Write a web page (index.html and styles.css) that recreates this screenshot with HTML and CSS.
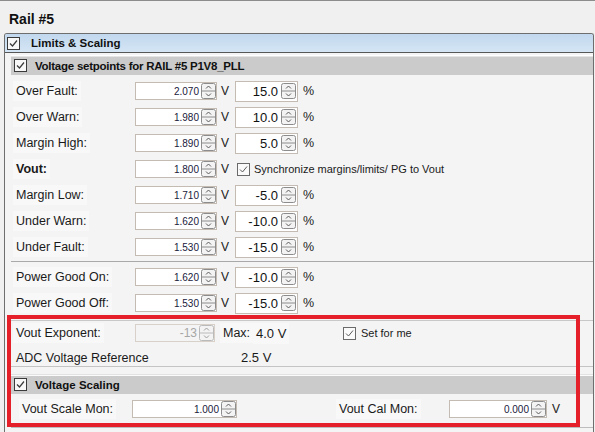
FILE: index.html
```html
<!DOCTYPE html>
<html>
<head>
<meta charset="utf-8">
<link rel="stylesheet" href="styles.css">
</head>
<body>
<svg class="defs" xmlns="http://www.w3.org/2000/svg">
  <symbol id="spin" viewBox="0 0 15 16">
    <rect x="0.5" y="0.5" width="14" height="15" rx="2" fill="#f3f3f3" stroke="#8c8c8c"/>
    <line x1="1" y1="8" x2="14" y2="8" stroke="#8c8c8c"/>
    <path d="M5 5.5 L7.5 3 L10 5.5" fill="none" stroke="#5a5a5a"/>
    <path d="M5 10.5 L7.5 13 L10 10.5" fill="none" stroke="#5a5a5a"/>
  </symbol>
  <symbol id="chk" viewBox="0 0 13 13">
    <rect x="0.5" y="0.5" width="12" height="12" fill="#f7f7f7" stroke="#3a3a3a"/>
    <path d="M3 6.5 L5.5 9 L10 3.5" fill="none" stroke="#3a3a3a" stroke-width="1.2"/>
  </symbol>
  <symbol id="chk2" viewBox="0 0 13 13">
    <rect x="0.5" y="0.5" width="12" height="12" fill="#fafafa" stroke="#6a6a6a"/>
    <path d="M3 6.5 L5.5 9 L10 3.5" fill="none" stroke="#5a5a5a" stroke-width="1"/>
  </symbol>
</svg>
<div class="app">
  <div class="title">Rail #5</div>
  <div class="panel">
    <div class="phead"><svg class="cb"><use href="#chk"/></svg>Limits &amp; Scaling</div>
    <div class="pbody">
      <div class="group">
        <div class="ghead tight"><svg class="cb cb2"><use href="#chk"/></svg>Voltage setpoints for RAIL #5 P1V8_PLL</div>
        <div class="rows">
          <div class="row"><span class="lbl"><span class="lt">Over Fault:</span></span><span class="box b1"><span class="val">2.070</span><svg class="spin"><use href="#spin"/></svg></span><span class="unit">V</span><span class="box b2"><span class="val">15.0</span><svg class="spin"><use href="#spin"/></svg></span><span class="pct">%</span></div>
          <div class="row"><span class="lbl"><span class="lt">Over Warn:</span></span><span class="box b1"><span class="val">1.980</span><svg class="spin"><use href="#spin"/></svg></span><span class="unit">V</span><span class="box b2"><span class="val">10.0</span><svg class="spin"><use href="#spin"/></svg></span><span class="pct">%</span></div>
          <div class="row"><span class="lbl"><span class="lt">Margin High:</span></span><span class="box b1"><span class="val">1.890</span><svg class="spin"><use href="#spin"/></svg></span><span class="unit">V</span><span class="box b2"><span class="val">5.0</span><svg class="spin"><use href="#spin"/></svg></span><span class="pct">%</span></div>
          <div class="row"><span class="lbl bold"><span class="lt">Vout:</span></span><span class="box b1"><span class="val">1.800</span><svg class="spin"><use href="#spin"/></svg></span><span class="unit">V</span><svg class="cbs"><use href="#chk2"/></svg><span class="small">Synchronize margins/limits/ PG to Vout</span></div>
          <div class="row"><span class="lbl"><span class="lt">Margin Low:</span></span><span class="box b1"><span class="val">1.710</span><svg class="spin"><use href="#spin"/></svg></span><span class="unit">V</span><span class="box b2"><span class="val">-5.0</span><svg class="spin"><use href="#spin"/></svg></span><span class="pct">%</span></div>
          <div class="row"><span class="lbl"><span class="lt">Under Warn:</span></span><span class="box b1"><span class="val">1.620</span><svg class="spin"><use href="#spin"/></svg></span><span class="unit">V</span><span class="box b2"><span class="val">-10.0</span><svg class="spin"><use href="#spin"/></svg></span><span class="pct">%</span></div>
          <div class="row"><span class="lbl"><span class="lt">Under Fault:</span></span><span class="box b1"><span class="val">1.530</span><svg class="spin"><use href="#spin"/></svg></span><span class="unit">V</span><span class="box b2"><span class="val">-15.0</span><svg class="spin"><use href="#spin"/></svg></span><span class="pct">%</span></div>
        </div>
        <div class="sep"></div>
        <div class="row"><span class="lbl"><span class="lt">Power Good On:</span></span><span class="box b1"><span class="val">1.620</span><svg class="spin"><use href="#spin"/></svg></span><span class="unit">V</span><span class="box b2"><span class="val">-10.0</span><svg class="spin"><use href="#spin"/></svg></span><span class="pct">%</span></div>
        <div class="row"><span class="lbl"><span class="lt">Power Good Off:</span></span><span class="box b1"><span class="val">1.530</span><svg class="spin"><use href="#spin"/></svg></span><span class="unit">V</span><span class="box b2"><span class="val">-15.0</span><svg class="spin"><use href="#spin"/></svg></span><span class="pct">%</span></div>
        <div class="sep2"></div>
        <div class="row exp"><span class="lbl"><span class="lt">Vout Exponent:</span></span><span class="box b1 dis"><span class="val">-13</span><svg class="spin"><use href="#spin"/></svg></span><span class="max"><span class="lt">Max:</span></span><span class="maxv"><span class="lt">4.0 V</span></span><svg class="cbs cbset"><use href="#chk2"/></svg><span class="small">Set for me</span></div>
        <div class="row adc"><span class="lbl wide">ADC Voltage Reference</span><span class="adcv">2.5 V</span></div>
      </div>
      <div class="group g2">
        <div class="ghead"><svg class="cb cb2"><use href="#chk"/></svg>Voltage Scaling</div>
        <div class="row scale"><span class="lbl ls"><span class="lt">Vout Scale Mon:</span></span><span class="box bs1"><span class="val">1.000</span><svg class="spin"><use href="#spin"/></svg></span><span class="lbl lc"><span class="lt">Vout Cal Mon:</span></span><span class="box bs2"><span class="val">0.000</span><svg class="spin"><use href="#spin"/></svg></span><span class="unit vu">V</span></div>
      </div>
    </div>
  </div>
  <div class="redbox"></div>
</div>
</body>
</html>
```
FILE: styles.css
```css
html, body {
  margin: 0;
  padding: 0;
}
body {
  background: #f0f0f0;
  font-family: "Liberation Sans", Arial, sans-serif;
  font-size: 12px;
  color: #1a1a1a;
}
.defs {
  display: block;
  width: 0;
  height: 0;
  overflow: hidden;
}
.app {
  position: relative;
  width: 595px;
  height: 432px;
  overflow: hidden;
  border-top: 1px solid #8c8c8c;
  box-sizing: border-box;
}
.title {
  height: 32px;
  box-sizing: border-box;
  padding: 4px 9px 0;
  line-height: 28px;
  font-size: 14px;
  font-weight: bold;
  color: #111;
}
.panel {
  margin: 0 1px 0 4px;
  height: 399px;
  border: 1px solid #6e6e6e;
  border-bottom: none;
  border-radius: 3px 3px 0 0;
  background: #f4f4f4;
}
.phead {
  height: 18px;
  display: flex;
  align-items: center;
  padding-left: 2px;
  background: linear-gradient(#c2d8ee, #d4e5f4);
  border-bottom: 1px solid #575757;
  border-radius: 2px 2px 0 0;
  font-weight: bold;
  font-size: 11.5px;
  color: #111;
}
.cb {
  width: 13px;
  height: 13px;
  flex: none;
  margin-right: 11px;
}
.cb2 {
  margin-right: 8px;
}
.pbody {
  padding-left: 6px;
}
.group {
  padding-top: 2px;
}
.g2 {
  padding-top: 7px;
  padding-bottom: 3px;
  border-bottom: 1px solid #bdbdbd;
}
.ghead {
  height: 20px;
  box-sizing: border-box;
  border-top: 1px solid #ffffff;
  box-shadow: inset 0 1px #e4e4e4;
  background: #cbcbcb;
  display: flex;
  align-items: center;
  padding-left: 3px;
  font-weight: bold;
  font-size: 11.5px;
  color: #111;
}
.tight {
  letter-spacing: -0.25px;
}
.g2 .ghead {
  border-top-color: #e2e2e2;
  box-shadow: inset 0 1px #fbfbfb;
}
.rows {
  padding-top: 3px;
}
.row {
  display: flex;
  align-items: center;
  height: 26px;
  padding-left: 5px;
}
.lbl {
  width: 119px;
  flex: none;
  font-size: 12.5px;
}
.lt {
  background: #f8f8f8;
  padding: 3px 3px;
  margin-left: -3px;
}
.bold {
  font-weight: bold;
}
.small {
  font-size: 11px;
}
.box {
  display: flex;
  align-items: center;
  flex: none;
  background: #ffffff;
  border: 1px solid #c4bcb3;
  box-sizing: border-box;
}
.val {
  flex: 1;
  text-align: right;
  padding-right: 2px;
  white-space: nowrap;
}
.b1 {
  width: 82px;
  height: 18px;
}
.b1 .val, .bs1 .val, .bs2 .val {
  font-size: 10px;
  color: #20203c;
}
.b2 {
  width: 63px;
  height: 21px;
}
.b2 .val {
  font-size: 13px;
  color: #111;
  padding-right: 3px;
}
.spin {
  width: 15px;
  height: 16px;
  flex: none;
}
.b2 .spin {
  margin-right: 1px;
}
.unit {
  width: 14px;
  margin-left: 4px;
  flex: none;
}
.pct {
  margin-left: 5px;
  font-size: 12.5px;
}
.cbs {
  width: 13px;
  height: 13px;
  flex: none;
  margin-left: 2px;
  margin-right: 4px;
}
.sep {
  height: 1px;
  background: #a9a9a9;
  margin: 1px 0 2px 0;
}
.sep2 {
  height: 1px;
  background: #c8c8c8;
  margin-top: 4px;
}
.exp {
  height: 24px;
}
.dis {
  width: 80px;
  background: #f4f4f4;
  border-color: #d8d1ca;
}
.dis .val {
  font-size: 12px;
  color: #a6a6a6;
}
.dis .spin {
  opacity: 0.55;
}
.max {
  margin-left: 8px;
  width: 33px;
  flex: none;
  font-size: 12.5px;
}
.maxv {
  width: 87px;
  flex: none;
  font-size: 13px;
}
.cbset {
  margin-left: 0;
  margin-right: 5px;
}
.adc {
  height: 17px;
  padding-top: 4px;
  border-bottom: 1px solid #c4c4c4;
}
.adcv {
  font-size: 13px;
}
.wide {
  width: 225px;
}
.scale {
  height: 30px;
  padding-left: 11px;
}
.ls {
  width: 110px;
}
.bs1 {
  width: 105px;
  height: 18px;
}
.lc {
  width: 110px;
  margin-left: 102px;
}
.bs2 {
  width: 98px;
  height: 18px;
}
.vu {
  margin-left: 5px;
}
.redbox {
  position: absolute;
  left: 7px;
  top: 314px;
  width: 573px;
  height: 112px;
  box-sizing: border-box;
  border: 4px solid #e5202a;
}
```
